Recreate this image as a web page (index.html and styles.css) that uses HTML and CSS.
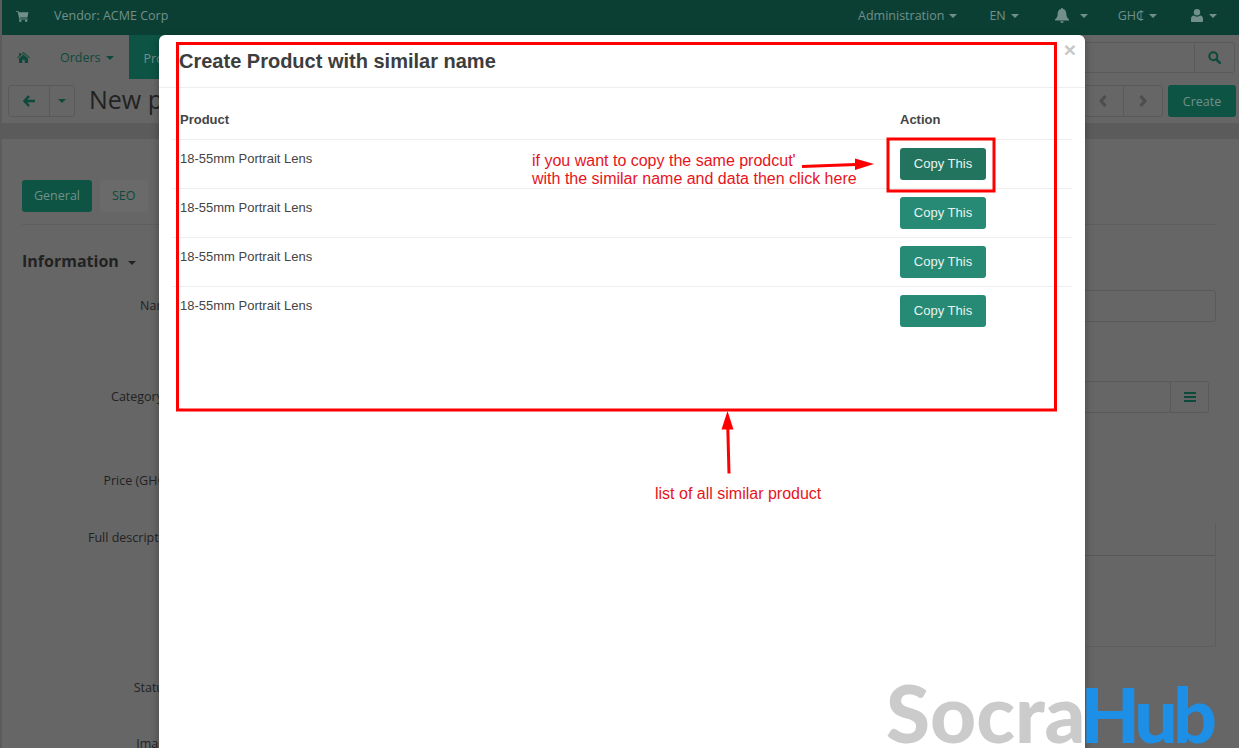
FILE: index.html
```html
<!DOCTYPE html>
<html lang="en">
<head>
<meta charset="utf-8">
<title>New product</title>
<link rel="stylesheet" href="styles.css">
</head>
<body>
<div class="app">
  <header class="topbar">
    <svg class="ic cart" viewBox="0 0 14 13"><path d="M0 1h2.6l.4 1.5h10.5L12.3 8H4.2l.3 1.3h8v1H3.6L1.8 2H0z"/><circle cx="4.6" cy="11.6" r="1.3"/><circle cx="11" cy="11.6" r="1.3"/></svg>
    <span class="vendor">Vendor: ACME Corp</span>
    <span class="tb admin">Administration<i class="caret"></i></span>
    <span class="tb lang">EN<i class="caret"></i></span>
    <span class="tb bell"><svg class="ic" viewBox="0 0 14 15"><path d="M7 0c.7 0 1 .5 1 1 2.3.5 3.3 2.4 3.3 4.5 0 3 .9 4.5 2.7 6V12.500H0V11.500C1.800 10 2.700 8.500 2.700 5.500 2.700 3.400 3.700 1.500 6 1c0-.5.3-1 1-1z"/><path d="M5.300 13.300h3.400c0 1-.7 1.700-1.700 1.700s-1.700-.7-1.700-1.700z"/></svg><i class="caret"></i></span>
    <span class="tb cur">GH₵<i class="caret"></i></span>
    <span class="tb usr"><svg class="ic" viewBox="0 0 12 13"><circle cx="6" cy="3.300" r="3.200"/><path d="M0 12V10c0-2.300 1.300-3.500 2.800-3.500C3.700 7.200 4.800 7.700 6 7.700s2.300-.5 3.200-1.200c1.500 0 2.800 1.200 2.800 3.500v2c0 .6-.5 1-1 1H1c-.5 0-1-.4-1-1z"/></svg><i class="caret"></i></span>
  </header>

  <nav class="nav">
    <svg class="ic home" viewBox="0 0 13 11"><path d="M6.500 0 13 5.600l-.6.7-5.900-5-5.900 5-.6-.7 2-1.700V1h1.600v1.700z"/><path d="M6.500 2.400 11 6.200V11H7.700V7.800H5.300V11H2V6.200z"/></svg>
    <span class="nav-link">Orders<i class="caret dark"></i></span>
    <span class="nav-active">Products</span>
    <div class="search">
      <span class="search-input"></span>
      <span class="search-btn"><svg class="ic" viewBox="0 0 13 13"><circle cx="5.300" cy="5.300" r="4" fill="none" stroke="currentColor" stroke-width="2"/><path d="m8.300 8.300 3.700 3.700" stroke="currentColor" stroke-width="2.400" stroke-linecap="round"/></svg></span>
    </div>
  </nav>

  <div class="headrow">
    <div class="btn-group">
      <span class="bg-back"><svg class="ic" viewBox="0 0 13 12"><path d="M6 1 1.500 6 6 11M2 6h10" fill="none" stroke="currentColor" stroke-width="2.600"/></svg></span>
      <span class="bg-drop"><i class="caret dark"></i></span>
    </div>
    <h1 class="title">New product</h1>
    <div class="pager">
      <span class="pg"><svg class="ic" viewBox="0 0 8 12"><path d="M6.500 1 2 6l4.500 5" fill="none" stroke="currentColor" stroke-width="3"/></svg></span>
      <span class="pg"><svg class="ic" viewBox="0 0 8 12"><path d="M1.500 1 6 6l-4.500 5" fill="none" stroke="currentColor" stroke-width="3"/></svg></span>
    </div>
    <span class="create">Create</span>
  </div>

  <main class="panel">
    <div class="tabs">
      <span class="tab on">General</span>
      <span class="tab">SEO</span>
    </div>
    <h2 class="section">Information<i class="caret big"></i></h2>
    <div class="row r-name"><label class="lbl">Name</label><span class="input"></span></div>
    <div class="row r-cat"><label class="lbl">Category</label><span class="input"></span><span class="addon"><svg class="ic" viewBox="0 0 12 10"><path d="M0 0h12v2H0zM0 4h12v2H0zM0 8h12v2H0z"/></svg></span></div>
    <div class="row r-price"><label class="lbl">Price (GH₵)</label></div>
    <div class="row r-desc"><label class="lbl">Full description</label><div class="editor"><div class="ed-bar"></div><div class="ed-body"></div></div></div>
    <div class="row r-status"><label class="lbl">Status</label></div>
    <div class="row r-image"><label class="lbl">Image</label></div>
  </main>

  <section class="modal">
    <header class="m-head">
      <h3 class="m-title">Create Product with similar name</h3>
      <span class="m-close">×</span>
    </header>
    <table class="m-table">
      <thead><tr><th>Product</th><th class="c-act">Action</th></tr></thead>
      <tbody>
        <tr><td>18-55mm Portrait Lens</td><td class="c-act"><span class="copy hover">Copy This</span></td></tr>
        <tr><td>18-55mm Portrait Lens</td><td class="c-act"><span class="copy">Copy This</span></td></tr>
        <tr><td>18-55mm Portrait Lens</td><td class="c-act"><span class="copy">Copy This</span></td></tr>
        <tr><td>18-55mm Portrait Lens</td><td class="c-act"><span class="copy">Copy This</span></td></tr>
      </tbody>
    </table>
  </section>

  <svg class="marks" viewBox="0 0 1239 748">
    <rect x="177.500" y="43.500" width="878" height="366.500" fill="none" stroke="#f00" stroke-width="3"/>
    <rect x="888" y="139" width="106" height="52" fill="none" stroke="#f00" stroke-width="3"/>
    <path d="M802 166.500 856 164.500" stroke="#f00" stroke-width="3"/>
    <path d="M855 158.500 874 164 855 170z" fill="#f00"/>
    <path d="M729 473.500 727.800 428" stroke="#f00" stroke-width="3"/>
    <path d="M721.500 429.500 727.500 411 733.500 429.500z" fill="#f00"/>
  </svg>
  <p class="note n1">if you want to copy the same prodcut'<br>with the similar name and data then click here</p>
  <p class="note n2">list of all similar product</p>
  <div class="logo"><span class="lg-a">Socra</span><span class="lg-b">Hub</span></div>
</div>
</body>
</html>
```
FILE: styles.css
```css
* { box-sizing: border-box; }
html, body { margin: 0; height: 100%; overflow: hidden; }
body { background: #5b5b5b; font-family: "Open Sans", "Noto Sans", sans-serif; font-size: 12.500px; color: #222; }
.app { position: relative; height: 748px; overflow: hidden; padding-left: 2px; }
.ic { display: block; fill: currentColor; }
.caret { display: inline-block; width: 0; height: 0; border: 4px solid transparent; border-top-color: currentColor; border-bottom: 0; margin-left: 5px; vertical-align: 2px; }
.caret.dark { color: #0d4a3b; }

.topbar { height: 35px; padding-bottom: 4px; background: #0c3f34; color: #71908a; display: flex; align-items: center; }
.cart { width: 13px; height: 12px; margin-left: 14px; }
.vendor { margin-left: 25px; }
.tb { display: flex; align-items: center; }
.tb .caret { margin-left: 5px; }
.admin { margin-left: auto; }
.lang { margin-left: 32px; }
.bell { margin-left: 36px; }
.bell .ic { width: 14px; height: 15px; }
.bell .caret { margin-left: 11px; }
.cur { margin-left: 30px; }
.usr { margin-left: 34px; margin-right: 22px; }
.usr .ic { width: 12px; height: 13px; }
.usr .caret { margin-left: 6px; }

.nav { height: 44px; background: #666; display: flex; align-items: center; color: #0d4a3b; }
.home { width: 13px; height: 11px; margin-left: 15px; }
.nav-link { margin-left: 30px; }
.nav-active { margin-left: 15px; height: 44px; background: #0d5444; color: #71908a; padding: 15px 15px 0; width: 140px; }
.search { margin-left: auto; margin-right: 4px; display: flex; height: 31px; width: 300px; border: 1px solid #5a5a5a; border-radius: 3px; }
.search-input { flex: 1; }
.search-btn { width: 40px; border-left: 1px solid #5a5a5a; display: flex; align-items: center; justify-content: center; }
.search-btn .ic { width: 13px; height: 13px; }

.headrow { height: 44px; background: #666; display: flex; align-items: center; padding: 0 3px 0 6px; }
.btn-group { display: flex; height: 32px; width: 67px; border: 1px solid #5a5a5a; border-radius: 3px; color: #0d4a3b; }
.bg-back { width: 41px; border-right: 1px solid #5a5a5a; display: flex; align-items: center; justify-content: center; }
.bg-back .ic { width: 13px; height: 12px; }
.bg-drop { flex: 1; display: flex; align-items: center; justify-content: center; }
.bg-drop .caret { margin: 0; }
.title { margin: 0 0 4px 14px; font-size: 25px; font-weight: 400; color: #222; }
.pager { margin-left: auto; display: flex; height: 32px; width: 80px; border: 1px solid #5a5a5a; border-radius: 3px; color: #4d4d4d; }
.pg { flex: 1; display: flex; align-items: center; justify-content: center; }
.pg + .pg { border-left: 1px solid #5a5a5a; }
.pg .ic { width: 8px; height: 12px; }
.create { margin-left: 5px; width: 68px; height: 32px; border-radius: 3px; background: #0d5444; color: #71908a; display: flex; align-items: center; justify-content: center; }

.panel { margin-top: 16px; height: 620px; background: #666; padding: 41px 23px 0 20px; }
.tabs { display: flex; gap: 8px; height: 45px; border-bottom: 1px solid #5e5e5e; }
.tab { height: 32px; padding: 0 12px; line-height: 32px; border-radius: 3px; background: #6a6a6a; color: #0d4a3b; }
.tab.on { background: #0d5444; color: #71908a; }
.section { margin: 26px 0 0; font-size: 16px; font-weight: 700; line-height: 20px; color: #222; }
.caret.big { margin-left: 9px; vertical-align: 2px; border-width: 4.500px; border-bottom: 0; }
.row { display: flex; align-items: flex-start; }
.lbl { width: 150px; flex: none; text-align: right; white-space: nowrap; line-height: 18px; color: #222; }
.input { flex: 1; height: 32px; border: 1px solid #5a5a5a; border-radius: 3px; }
.addon { width: 39px; height: 32px; margin-right: 7px; margin-left: -1px; border: 1px solid #5a5a5a; border-radius: 0 3px 3px 0; display: flex; align-items: center; justify-content: center; color: #0d4a3b; }
.addon .ic { width: 12px; height: 10px; }
.r-name { margin-top: 19px; }
.r-name .lbl { width: 153px; padding-top: 7px; }
.r-cat { margin-top: 59px; }
.r-cat .lbl { padding-top: 7px; padding-right: 9px; }
.r-price { margin-top: 59px; }
.r-price .lbl { width: 147px; }
.r-desc { margin-top: 33px; }
.r-desc .lbl { width: 155px; padding-top: 6px; }
.editor { flex: 1; height: 124px; border-right: 1px solid #5e5e5e; }
.ed-bar { height: 33px; border-bottom: 1px solid #585858; }
.ed-body { height: 91px; border-bottom: 1px solid #5e5e5e; }
.r-status { margin-top: 32px; }
.r-status .lbl { width: 148px; }
.r-image { margin-top: 38px; }

.modal { position: absolute; left: 159px; top: 35px; width: 926px; height: 760px; background: #fff; border-radius: 6px 6px 0 0; font-family: "Liberation Sans", Arial, sans-serif; color: #444; box-shadow: 0 3px 9px rgba(0,0,0,.3); }
.m-head { position: relative; height: 53px; border-bottom: 1px solid #eee; padding: 15px 20px 0; }
.m-title { margin: 0; font-size: 20px; line-height: 22px; font-weight: 700; color: #3d3d3d; }
.m-close { position: absolute; right: 9px; top: 4px; font-size: 21px; font-weight: 700; line-height: 21px; color: #c8c8c8; }
.m-table { margin: 10px 0 0 13px; width: 900px; border-collapse: collapse; font-size: 13px; }
.m-table th { text-align: left; height: 41px; padding: 2px 8px 0; border-bottom: 1px solid #eee; font-weight: 700; color: #444; }
.m-table td { height: 49px; padding: 8px; vertical-align: top; border-bottom: 1px solid #eee; line-height: 21px; }
.m-table tr:last-child td { border-bottom: 0; }
.c-act { width: 180px; }
.copy { display: block; width: 86px; height: 32px; line-height: 31px; text-align: center; border-radius: 3px; background: #268a75; color: #e8f3f0; }
.copy.hover { background: #22745f; }

.marks { position: absolute; left: 0; top: 0; width: 1239px; height: 748px; pointer-events: none; }
.note { position: absolute; margin: 0; font-family: "Liberation Sans", Arial, sans-serif; font-size: 16px; line-height: 18px; color: #e6141c; white-space: nowrap; }
.n1 { left: 532px; top: 152px; }
.n2 { left: 655px; top: 485px; }
.logo { position: absolute; left: 886px; top: 677px; font-family: "Lato", sans-serif; font-weight: 900; font-size: 80px; line-height: 70px; white-space: nowrap; }
.lg-a { color: #cbcbcb; }
.lg-b { color: #1e8fe6; font-size: 77px; letter-spacing: -5px; margin-left: -5px; }
```
